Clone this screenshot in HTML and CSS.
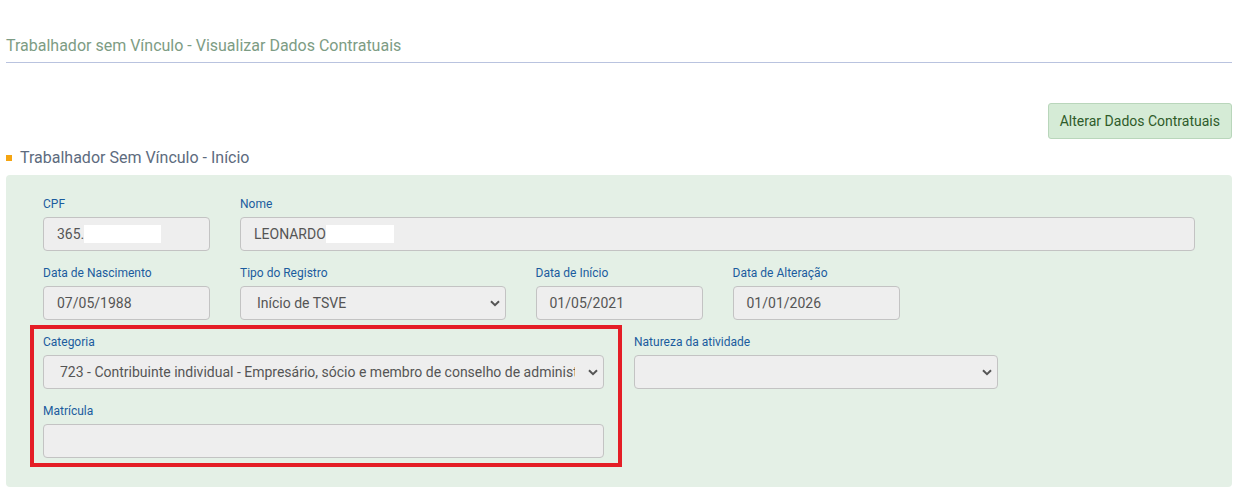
FILE: index.html
```html
<!DOCTYPE html>
<html lang="pt-BR">
<head>
  <meta charset="UTF-8">
  <meta name="viewport" content="width=device-width, initial-scale=1.0">
  <title>Trabalhador sem Vínculo - Visualizar Dados Contratuais</title>
  <link rel="stylesheet" href="styles.css">
</head>
<body>

  <div class="page-title">
    <h1>Trabalhador sem Vínculo - Visualizar Dados Contratuais</h1>
  </div>

  <div class="actions">
    <button class="btn-alterar">Alterar Dados Contratuais</button>
  </div>

  <h2 class="section-title"><span class="marker"></span>Trabalhador Sem Vínculo - Início</h2>

  <div class="panel">
    <div class="grid">
      <div class="field span-2">
        <label>CPF</label>
        <div class="input">365.<span class="mask mask-cpf"></span></div>
      </div>
      <div class="field span-10">
        <label>Nome</label>
        <div class="input">LEONARDO<span class="mask mask-nome"></span></div>
      </div>

      <div class="field span-2">
        <label>Data de Nascimento</label>
        <div class="input">07/05/1988</div>
      </div>
      <div class="field span-3">
        <label>Tipo do Registro</label>
        <div class="select">
          <span class="value">Início de TSVE</span>
          <svg class="chevron" viewBox="0 0 10 7"><path d="M1 1.2 5 5.2 9 1.2" fill="none" stroke="#555" stroke-width="2"/></svg>
        </div>
      </div>
      <div class="field span-2">
        <label>Data de Início</label>
        <div class="input">01/05/2021</div>
      </div>
      <div class="field span-2">
        <label>Data de Alteração</label>
        <div class="input">01/01/2026</div>
      </div>
      <div class="span-3"></div>

      <div class="span-6 destaque">
        <div class="field">
          <label>Categoria</label>
          <div class="select">
            <span class="value">723 - Contribuinte individual - Empresário, sócio e membro de conselho de administração ou fiscal</span>
            <svg class="chevron" viewBox="0 0 10 7"><path d="M1 1.2 5 5.2 9 1.2" fill="none" stroke="#555" stroke-width="2"/></svg>
          </div>
        </div>
        <div class="field">
          <label>Matrícula</label>
          <div class="input"></div>
        </div>
      </div>
      <div class="field span-4 top">
        <label>Natureza da atividade</label>
        <div class="select">
          <span class="value"></span>
          <svg class="chevron" viewBox="0 0 10 7"><path d="M1 1.2 5 5.2 9 1.2" fill="none" stroke="#555" stroke-width="2"/></svg>
        </div>
      </div>
    </div>
  </div>

</body>
</html>
```

FILE: styles.css
```css
body {
  font-family: Roboto, "Liberation Sans", sans-serif;
  margin: 0;
  padding: 0 18px 0 6px;
  background: #ffffff;
  color: #555555;
}

.page-title {
  padding-top: 36px;
  border-bottom: 1px solid #b9c3df;
}
.page-title h1 {
  margin: 0;
  font-size: 16px;
  font-weight: 400;
  line-height: 20px;
  padding-bottom: 6px;
  color: #7d9c84;
}

.actions {
  display: flex;
  justify-content: flex-end;
  margin-top: 40px;
}
.btn-alterar {
  font-family: Roboto, "Liberation Sans", sans-serif;
  font-size: 14px;
  color: #2f5b2a;
  background: #d5ebd6;
  border: 1px solid #b9d6bb;
  border-radius: 3px;
  height: 36px;
  padding: 0 11px;
  cursor: pointer;
}

.section-title {
  display: flex;
  align-items: center;
  margin: 9px 0 7px;
  font-size: 16px;
  font-weight: 400;
  line-height: 20px;
  color: #5d6b7e;
}
.marker {
  width: 6px;
  height: 6px;
  background: #f5a511;
  margin-right: 8px;
}

.panel {
  background: #e4f0e6;
  border-radius: 4px;
  padding: 21px 37px 29px;
}

.grid {
  display: grid;
  grid-template-columns: repeat(12, 1fr);
  column-gap: 30px;
  row-gap: 14px;
}
.span-2 { grid-column: span 2; }
.span-3 { grid-column: span 3; }
.span-4 { grid-column: span 4; }
.span-6 { grid-column: span 6; }
.span-10 { grid-column: span 10; }
.top { align-self: start; }

.field label {
  display: block;
  font-size: 12px;
  line-height: 16px;
  color: #1b5c9e;
  margin-bottom: 5px;
}

.input,
.select {
  box-sizing: border-box;
  height: 34px;
  background: #eeeeee;
  border: 1px solid #c3c3c3;
  border-radius: 4px;
  font-size: 14px;
  line-height: 32px;
  color: #555555;
  padding-left: 13px;
  white-space: nowrap;
  overflow: hidden;
}
.select {
  display: flex;
  align-items: center;
  padding-left: 16px;
  padding-right: 5px;
}
.select .value {
  flex: 1;
  min-width: 0;
  overflow: hidden;
  margin-right: 13px;
}
.chevron {
  flex: none;
  width: 10px;
  height: 7px;
}

.mask {
  display: inline-block;
  vertical-align: middle;
  height: 18px;
  background: #ffffff;
  margin-top: -3px;
}
.mask-cpf { width: 77px; }
.mask-nome { width: 68px; }

.destaque {
  position: relative;
  display: flex;
  flex-direction: column;
  gap: 14px;
}
.destaque::before {
  content: "";
  position: absolute;
  left: -13px;
  right: -18px;
  top: -9px;
  bottom: -9px;
  border: 4px solid #e41e26;
  pointer-events: none;
}
```
